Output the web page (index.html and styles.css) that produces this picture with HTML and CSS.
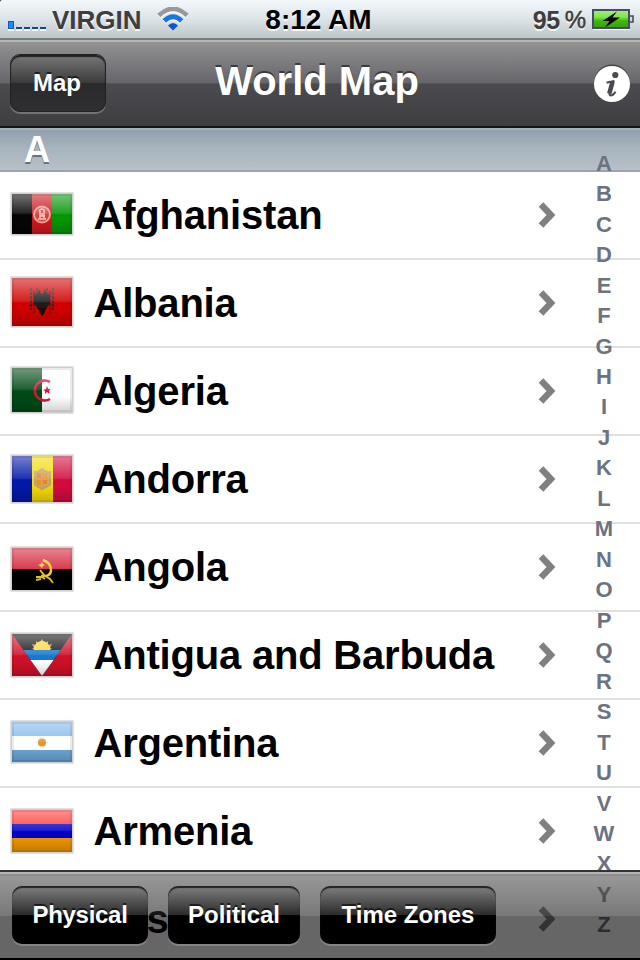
FILE: index.html
```html
<!DOCTYPE html>
<html lang="en">
<head>
  <meta charset="UTF-8">
  <meta name="viewport" content="width=device-width, initial-scale=1.0">
  <title>World Map</title>
  <link rel="stylesheet" href="styles.css">
</head>
<body>
  <div class="screen">
    <header class="status">
      <div class="carrier">
        <div class="signal"><i class="on"></i><i></i><i></i><i></i><i></i></div>
        <span class="name">VIRGIN</span>
        <svg class="wifi" width="32" height="25" viewBox="0 0 32 25">
          <path d="M1.800 9.500Q16 -4 30.200 9.500" fill="none" stroke="#fff" stroke-width="5"/>
          <path d="M7.300 15Q16 6.500 24.700 15" fill="none" stroke="#fff" stroke-width="5"/>
          <path d="M1.800 8.500Q16 -5 30.200 8.500" fill="none" stroke="#999" stroke-width="4.600"/>
          <path d="M7.300 14Q16 5.500 24.700 14" fill="none" stroke="#1677e4" stroke-width="4.800"/>
          <path d="M11 18.500Q16 13.500 21 18.500L16 23.500Z" fill="#0b55d0"/>
        </svg>
      </div>
      <div class="time">8:12 AM</div>
      <div class="power">
        <span class="percent">95</span><span class="sign">%</span>
        <svg class="battery" width="42" height="21" viewBox="0 0 42 21">
          <defs>
            <linearGradient id="charge" x1="0" y1="0" x2="0" y2="1">
              <stop offset="0" stop-color="#a4ee7c"/>
              <stop offset=".4" stop-color="#7ce84a"/>
              <stop offset=".6" stop-color="#3fb80c"/>
              <stop offset="1" stop-color="#3a9d0c"/>
            </linearGradient>
          </defs>
          <path d="M1 20.500H38" stroke="#fff"/>
          <rect x="1" y="1" width="36" height="18" fill="url(#charge)" stroke="#484c63" stroke-width="2"/>
          <path d="M38 7h3v6h-3" fill="#d5dbe0" stroke="#484c63" stroke-width="1.600"/>
          <path d="M25 2.500L10.500 12H17.500L13 18.500L28 8.500H20.500Z" fill="#000"/>
        </svg>
      </div>
    </header>

    <nav class="navbar">
      <a class="button back">Map</a>
      <h1>World Map</h1>
      <svg class="info" width="38" height="40" viewBox="0 0 38 40">
        <circle cx="19" cy="18.500" r="18" fill="#47464a"/>
        <circle cx="19" cy="20" r="18" fill="#fff"/>
        <circle cx="22.300" cy="11" r="3.100" fill="#4b4a4e"/>
        <path d="M13.500 18.800Q18 17.500 21.500 17" fill="none" stroke="#4b4a4e" stroke-width="2"/>
        <path d="M20.500 17L16.800 28Q15.500 32.500 19.500 31Q21.500 29.500 22.500 27.800" fill="none" stroke="#4b4a4e" stroke-width="2.200"/>
        <path d="M19.500 18L16.300 29.500" stroke="#4b4a4e" stroke-width="4.600"/>
      </svg>
    </nav>

    <h2 class="section">A</h2>
    <ul class="countries">
      <li>
        <div class="flag low"><svg width="60" height="40">
          <rect width="20" height="40" fill="#050505"/><rect x="20" width="20" height="40" fill="#cc1820"/><rect x="40" width="20" height="40" fill="#059505"/>
          <circle cx="30" cy="20.500" r="8" fill="#d4443f" stroke="#eba598" stroke-width="2"/>
          <path d="M27 17q3-4 6 0M28 17v7m4-7v7M26 25h8M30 19v3M27 22h6" fill="none" stroke="#f3c7b9" stroke-width="1.500"/>
        </svg></div>
        <span>Afghanistan</span>
        <svg class="chevron" width="20" height="28"><path d="M4 3.500L14 14L4 24.500"/></svg>
      </li>
      <li>
        <div class="flag low"><svg width="60" height="48">
          <rect width="60" height="48" fill="#d00000"/>
          <path d="M19 10v22M22 13v22M41 10v22M38 13v22M25 10v8M35 10v8" stroke="#5e1414" stroke-width="2" stroke-dasharray="3 1"/>
          <path d="M22 15l3 2 2-6 2 5h2l2-5 2 6 3-2v10l-4 6-4 2-4-2-4-6z" fill="#1c1c1c"/>
          <path d="M25 29l3 1h4l3-1-2 4-1 3-2 2-2-2-1-3z" fill="#250808"/>
        </svg></div>
        <span>Albania</span>
        <svg class="chevron" width="20" height="28"><path d="M4 3.500L14 14L4 24.500"/></svg>
      </li>
      <li>
        <div class="flag low"><svg width="60" height="44">
          <rect width="60" height="44" fill="#fff"/><rect width="30" height="44" fill="#004a16"/>
          <path d="M38 14A10 10 0 1 0 38 31" fill="none" stroke="#e01035" stroke-width="2.600"/>
          <path d="M31 22l3-1 1-3 1.500 3h2l-1.500 2 .500 3-2.500-2-2 2v-3z" fill="#e01035"/>
        </svg></div>
        <span>Algeria</span>
        <svg class="chevron" width="20" height="28"><path d="M4 3.500L14 14L4 24.500"/></svg>
      </li>
      <li>
        <div class="flag"><svg width="60" height="46">
          <rect width="20" height="46" fill="#0318a8"/><rect x="20" width="21" height="46" fill="#f5d900"/><rect x="41" width="19" height="46" fill="#d20b3c"/>
          <path d="M23 16q3 1 4-1l3-2 3 2q2 2 5 1v13l-8 4-7-4z" fill="#d8a548" stroke="#b5a56f" stroke-width="2"/>
          <path d="M25 17h4v5h-4zM31 24h4v4h-4z" fill="#ed7b42"/><path d="M31 17v6m3-6v6M26 24v5m2-5v5" stroke="#eb8a23" stroke-width="1.500"/>
        </svg></div>
        <span>Andorra</span>
        <svg class="chevron" width="20" height="28"><path d="M4 3.500L14 14L4 24.500"/></svg>
      </li>
      <li>
        <div class="flag high"><svg width="60" height="42">
          <rect width="60" height="21" fill="#d6233a"/><rect y="21" width="60" height="21" fill="#000"/>
          <path d="M31 12q8 3 8 10 0 7-10 6" fill="none" stroke="#f3cf1d" stroke-width="2.500"/>
          <path d="M28 22l4 5 6 4 3 4M24 29h6l3 2M24 32l5-1" fill="none" stroke="#e5c420" stroke-width="2"/><path d="M30 14l1 2 2 1-2 1-1 2-2-2-2-1 3-1z" fill="#f6d42a"/>
        </svg></div>
        <span>Angola</span>
        <svg class="chevron" width="20" height="28"><path d="M4 3.500L14 14L4 24.500"/></svg>
      </li>
      <li>
        <div class="flag"><svg width="60" height="42">
          <rect width="60" height="42" fill="#ce1029"/><path d="M0 0H60L30 42Z" fill="#111"/>
          <path d="M19 15l3-1-2-4 4 1v-4l3 2 3-4 3 4 3-2v4l4-1-2 4 3 1z" fill="#c99a3b"/><path d="M21.500 16a8.500 9 0 0 1 17 0z" fill="#ffd83a"/>
          <path d="M11.400 16H48.600L41.500 26H18.500Z" fill="#1478cf"/><path d="M18.500 26H41.500L30 42Z" fill="#fff"/>
        </svg></div>
        <span>Antigua and Barbuda</span>
        <svg class="chevron" width="20" height="28"><path d="M4 3.500L14 14L4 24.500"/></svg>
      </li>
      <li>
        <div class="flag low"><svg width="60" height="40">
          <rect width="60" height="14" fill="#7fb9ea"/><rect y="14" width="60" height="14" fill="#fff"/><rect y="28" width="60" height="12" fill="#6ba5d5"/>
          <circle cx="30" cy="20.500" r="4" fill="#e09628"/><circle cx="30" cy="20.500" r="5" fill="none" stroke="#edc38b" stroke-dasharray="1 2"/>
        </svg></div>
        <span>Argentina</span>
        <svg class="chevron" width="20" height="28"><path d="M4 3.500L14 14L4 24.500"/></svg>
      </li>
      <li>
        <div class="flag"><svg width="60" height="42">
          <rect width="60" height="14" fill="#ff3434"/><rect y="14" width="60" height="14" fill="#0000c8"/><rect y="28" width="60" height="14" fill="#ee9500"/>
        </svg></div>
        <span>Armenia</span>
        <svg class="chevron" width="20" height="28"><path d="M4 3.500L14 14L4 24.500"/></svg>
      </li>
      <li>
        <div class="flag empty"></div>
        <span>Australia</span>
        <svg class="chevron" width="20" height="28"><path d="M4 3.500L14 14L4 24.500"/></svg>
      </li>
    </ul>

    <div class="index">
      <a>A</a><a>B</a><a>C</a><a>D</a><a>E</a><a>F</a><a>G</a><a>H</a><a>I</a><a>J</a><a>K</a><a>L</a><a>M</a><a>N</a><a>O</a><a>P</a><a>Q</a><a>R</a><a>S</a><a>T</a><a>U</a><a>V</a><a>W</a><a>X</a><a>Y</a><a>Z</a>
    </div>

    <footer class="toolbar">
      <a class="button physical">Physical</a>
      <a class="button political">Political</a>
      <a class="button zones">Time Zones</a>
    </footer>
  </div>
</body>
</html>
```
FILE: styles.css
```css
* {
  box-sizing: border-box;
}
body {
  margin: 0;
  background: #000;
  font-family: "Liberation Sans", Arial, Helvetica, sans-serif;
  font-weight: bold;
}
.screen {
  position: relative;
  width: 640px;
  height: 960px;
  overflow: hidden;
  background: #fff;
}
h1, h2, ul {
  margin: 0;
  padding: 0;
}

/* status bar */
.status {
  display: grid;
  grid-template-columns: 1fr auto 1fr;
  height: 40px;
  padding: 0 6px 0 8px;
  line-height: 40px;
  border-bottom: 2px solid #727d80;
  background: radial-gradient(circle at 4px 4px, transparent 4px, #555 5px) 0 0 / 4px 4px no-repeat, linear-gradient(#f3f9fb, #dce4e8 50%, #bdc5c8);
  text-shadow: 0 2px 0 rgba(255, 255, 255, .8);
  color: #3e3e3e;
}
.carrier {
  display: flex;
}
.signal {
  display: flex;
  align-items: flex-end;
  gap: 2px;
  height: 29px;
}
.signal i {
  width: 6px;
  height: 2px;
  background: #0a3fc8;
  box-shadow: 0 2px 0 #fff;
}
.signal .on {
  height: 8px;
  border: 1px solid #0a55d8;
  background: #1c8cf5;
}
.carrier .name {
  margin-left: 6px;
  font-size: 26px;
}
.wifi {
  margin: 7px 0 0 15px;
}
.time {
  margin-right: 5px;
  font-size: 28px;
  color: #000;
}
.power {
  display: flex;
  justify-content: flex-end;
  font-size: 25px;
}
.percent {
  letter-spacing: -.5px;
}
.sign {
  margin: 0 6px 0 5px;
  font-size: 24px;
  font-weight: normal;
  -webkit-text-stroke: .5px #3e3e3e;
}
.battery {
  margin-top: 9px;
}

/* navigation bar */
.navbar {
  display: grid;
  grid-template-columns: 1fr auto 1fr;
  align-items: start;
  height: 88px;
  padding: 14px 9px 0 10px;
  border-bottom: 2px solid #151515;
  background: linear-gradient(#b5b5b5 2px, #929293 2px, #66656a 50%, #4b4a4e 51%, #3e3d40);
}
.navbar h1 {
  margin-right: 7px;
  padding-top: 4px;
  font-size: 40px;
  line-height: 46px;
  color: #fff;
  text-shadow: 0 -2px 0 #3b3b3d;
}
.button {
  height: 58px;
  border-radius: 10px;
  font-size: 24px;
  line-height: 58px;
  text-align: center;
  color: #fff;
  text-shadow: 0 -2px 0 rgba(0, 0, 0, .6);
}
.back {
  width: 96px;
  padding-right: 2px;
  border: 1px solid #222;
  line-height: 56px;
  background: linear-gradient(#777, #3b3b3c 50%, #2a2a2c 50%, #2f2f31);
  box-shadow: 0 2px 0 #737375, inset 0 2px 1px #222;
}
.info {
  justify-self: end;
  margin-top: 10px;
}

/* country list */
.section {
  height: 44px;
  padding-left: 24px;
  border-top: 2px solid #a5b1ba;
  border-bottom: 2px solid #98a4ae;
  background: linear-gradient(#91a1ad, #a7b3bd 45%, #b8c1c9);
  font-size: 36px;
  line-height: 40px;
  color: #fff;
  text-shadow: 0 2px 0 #66717b;
}
.countries {
  list-style: none;
}
.countries li {
  display: flex;
  align-items: center;
  height: 88px;
  padding: 0 84px 0 12px;
  border-bottom: 2px solid #e0e0e0;
  font-size: 40px;
  letter-spacing: -.2px;
}
.countries span {
  flex: 1;
  margin-left: 21.500px;
}
.flag {
  position: relative;
  width: 60px;
  box-shadow: 0 0 0 1.500px #cfcfcf, 0 0 2px 1px #d5d5d5;
}
.flag svg {
  display: block;
}
.flag::after {
  content: "";
  position: absolute;
  inset: 0;
  border: 2px solid rgba(0, 0, 0, .08);
  background: linear-gradient(rgba(255, 255, 255, .45), rgba(255, 255, 255, .12) 48%, transparent 52%, transparent 65%, rgba(0, 0, 0, .18)) border-box no-repeat;
}
.flag.low {
  margin-bottom: 2px;
}
.flag.high {
  margin-top: 4px;
}
.flag.empty {
  visibility: hidden;
}
.chevron {
  margin-right: -.5px;
}
.chevron path {
  fill: none;
  stroke: #808080;
  stroke-width: 6.400;
}

.index {
  position: absolute;
  top: 148.700px;
  right: 24px;
  width: 24px;
  display: flex;
  flex-direction: column;
  font-size: 22px;
  text-align: center;
  color: #6b7380;
}
.index a {
  height: 30.480px;
  line-height: 30.480px;
}

/* bottom toolbar lies over the list */
.toolbar {
  position: absolute;
  left: 0;
  right: 0;
  bottom: 0;
  display: flex;
  gap: 20px;
  height: 90px;
  padding: 14px 12px 0;
  border-top: 2px solid #333;
  border-bottom: 2px solid #000;
  background: linear-gradient(rgba(130, 130, 130, .6) 2px, rgba(85, 85, 85, .6) 2px, rgba(30, 30, 30, .6) 44px, rgba(0, 0, 0, .6) 44px);
}
.toolbar .button {
  background: linear-gradient(#808080, #2a2a2a 50%, #000 51%);
  box-shadow: 0 2px 0 #858585, inset 0 2px 1px #222;
}
.physical {
  width: 136px;
  letter-spacing: -.3px;
}
.political {
  width: 132px;
}
.zones {
  width: 176px;
}
```
